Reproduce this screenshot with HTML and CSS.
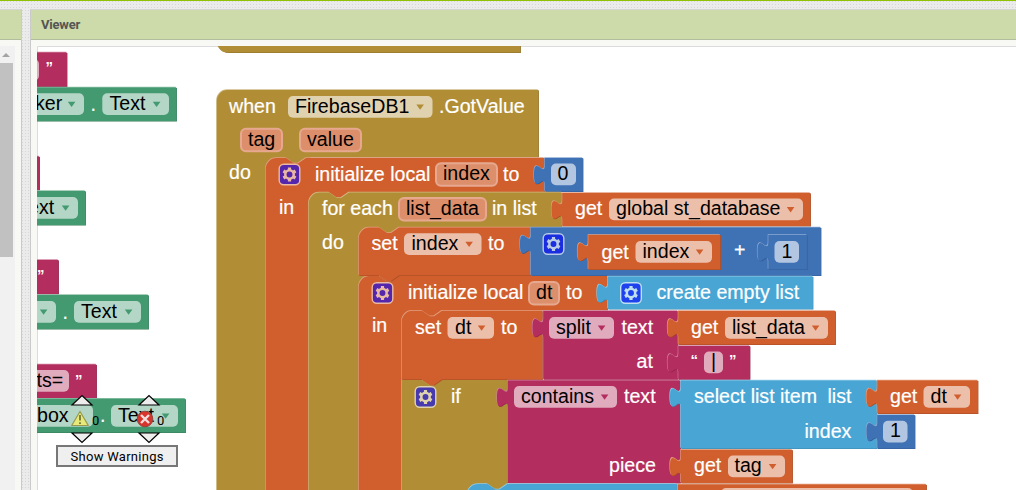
FILE: index.html
```html
<!DOCTYPE html>
<html lang="en">
<head>
<meta charset="utf-8">
<title>Viewer</title>
<link rel="stylesheet" href="styles.css">
</head>
<body>
<div class="topline"></div>
<main class="workbench">
  <aside class="palette">
    <div class="panel-head"></div>
    <div class="palette-body">
      <div class="scrollbar"><div class="scroll-up"></div><div class="scroll-thumb"></div></div>
    </div>
  </aside>
  <section class="viewer">
    <div class="panel-head">Viewer</div>
    <div class="viewer-body"><svg id="canvas" class="canvas" viewBox="37 46 979 444" width="979" height="444"></svg></div>
  </section>
</main>
<script src="blocks.js"></script>
</body>
</html>
```
FILE: styles.css
```css
* { box-sizing: border-box; }
body {
  margin: 0;
  width: 1016px;
  height: 490px;
  overflow: hidden;
  display: flex;
  flex-direction: column;
  font-family: Roboto, "Liberation Sans", sans-serif;
  background-color: #ebebeb;
  background-image: radial-gradient(#d7d7d7 0.8px, transparent 1px);
  background-size: 3px 3px;
}
.topline { flex: none; height: 1px; background: #8fc202; }
.workbench { flex: 1; display: flex; gap: 8px; padding-top: 8px; min-height: 0; }
.palette { width: 22px; flex: none; display: flex; flex-direction: column; background: #f8f9f4; border-right: 1px solid #cacaca; border-top: 1px solid #d4d4d4; }
.viewer { flex: 1; display: flex; flex-direction: column; background: #f8f9f4; border-left: 1px solid #cacaca; border-top: 1px solid #d4d4d4; }
.panel-head { flex: none; height: 30px; padding-left: 10px; line-height: 29px; font-size: 13px; font-weight: 700; letter-spacing: -0.2px; color: #555; background: #ccdba9; border-bottom: 1px solid #b3bd9d; }
.palette-body { flex: 1; padding-top: 6px; display: flex; }
.scrollbar { width: 15px; padding-right: 2px; background: #f1f1f1; }
.scroll-up { height: 4px; width: 8px; margin: 7px 0 6px 2px; background: #a3a3a3; clip-path: polygon(50% 0, 100% 100%, 0 100%); }
.scroll-thumb { height: 194px; background: #c1c1c1; }
.viewer-body { flex: 1; padding: 6px 0 0 6px; }
.canvas { display: block; background: #fff; }
.frame { fill: none; stroke: #dcdcdc; stroke-width: 1; }
.label, .value { font-family: "Liberation Sans", Arial, sans-serif; font-size: 19.6px; white-space: pre; }
.label { fill: #fff; stroke: #fff; stroke-width: 0.2px; }
.value { fill: #000; }
.quote { font-family: "Liberation Sans", Arial, sans-serif; font-size: 15px; font-weight: 700; fill: #fff; }
.field { fill: #fff; fill-opacity: 0.6; }
.param { fill: #dd8f6c; stroke: #e6a990; stroke-width: 2; }
.gear-box { fill: #00f; fill-opacity: 0.6; stroke-width: 1.4; }
.gear-ring { fill: none; stroke-width: 2.5; }
.gear-teeth { fill: none; stroke-width: 3.2; }
.tri { fill: #ededed; stroke: #000; stroke-width: 1.2; }
.button { fill: #efefef; stroke: #777; stroke-width: 2; }
.ui-text { font-family: Roboto, sans-serif; font-size: 13px; fill: #000; }
```
FILE: blocks.js
```js
const svg = document.getElementById('canvas');
const C = {
  gold: ['#b18e35', '#d0bb85', '#8b702b'],
  orange: ['#d05f2d', '#e49e80', '#a54b24'],
  blue: ['#3f71b5', '#8caad3', '#325a90'],
  cyan: ['#49a6d4', '#92cae5', '#3a84a9'],
  pink: ['#b32d5e', '#d1819e', '#8e244b'],
  green: ['#439970', '#8ec2a9', '#357a59']
};
const NOTCH = 'l8,5.4 h4 l8,-5.4';
const parts = [];
const add = s => parts.push(s);

function shape(c, d) {
  const [main, light, dark] = C[c];
  add(`<path d="${d}" fill="${dark}" transform="translate(.4 .5)"/>`);
  add(`<path d="${d}" fill="${light}" transform="translate(-.8 -.7)"/>`);
  add(`<path d="${d}" fill="${main}" transform="translate(-.2 .1)"/>`);
}
// Output block with a puzzle tab on its left edge.
function output(c, x, y, r, b) {
  shape(c, `M${x},${y} H${r} V${b} H${x} V${y + 27} c0,-13.5 -10.8,10.8 -10.8,-10.1 s10.8,3.4 10.8,-10.1 Z`);
}
function notchedTop(x, y, r) {
  return `M${x},${y + 10.8} a10.8,10.8 0 0 1 10.8,-10.8 H${x + 20.2} ${NOTCH} H${r}`;
}
// Container whose first row ends at b and whose arm runs down the left.
function wrap(c, x, y, r, b, inner, notch = true) {
  const head = notch ? notchedTop(x, y, r) : `M${x},${y + 10.8} a10.8,10.8 0 0 1 10.8,-10.8 H${r}`;
  shape(c, `${head} V${b} H${inner + 44} V500 H${x} Z`);
}
function stack(c, x, y, r, b, rounded) {
  const start = rounded ? notchedTop(x, y, r) : `M${x},${y} H${x + 20.2} ${NOTCH} H${r}`;
  shape(c, `${start} V${b} H${x + 40.2} l-8,5.4 h-4 l-8,-5.4 H${x} Z`);
}
function text(cls, x, y, s, w) {
  add(`<text class="${cls}" x="${x}" y="${y}"${w ? ` textLength="${w}"` : ''}>${s}</text>`);
}
const label = (x, y, s) => text('label', x, y, s);
function field(x, y, r, s, tx, c) {
  add(`<rect class="field" x="${x}" y="${y}" width="${r - x}" height="21.7" rx="5"/>`);
  text('value', tx, y + 16.7, s);
  if (c) add(`<path fill="${C[c][0]}" d="M${r - 16.2},${y + 8.5} h7.6 l-3.8,5.3 Z"/>`);
}
function param(x, y, r, s, tx) {
  add(`<rect class="param" x="${x + 1}" y="${y + 1}" width="${r - x - 2}" height="22.4" rx="5"/>`);
  text('value', tx, y + 17.8, s);
}
function gear(x, y, tint) {
  let teeth = '';
  for (let i = 0; i < 6; i++) {
    const a = (i * 60 + 30) * Math.PI / 180;
    teeth += `M${Math.cos(a) * 4.5},${Math.sin(a) * 4.5} L${Math.cos(a) * 7},${Math.sin(a) * 7} `;
  }
  add(`<g transform="translate(${x + 11} ${y + 11})" stroke="${tint}"><rect class="gear-box" x="-10.3" y="-10.3" width="20.6" height="20.6" rx="4.5"/><circle class="gear-ring" r="4.2"/><path class="gear-teeth" d="${teeth}"/></g>`);
}

add('<path class="frame" d="M37.5,490 V46.5 H1016"/>');

// Blocks at the left edge
output('pink', 10, 52.5, 67, 86.5);
field(10, 59, 39, '', 0);
text('quote', 45.5, 72, '”');
output('green', 10, 87.5, 176.5, 121);
field(10, 93.3, 84, 'ker', 35, 'green');
label(90.5, 110.5, '.');
field(102.3, 93.3, 169, 'Text', 109.5, 'green');
output('pink', 10, 156.5, 39.5, 190);
output('green', 10, 191, 85.5, 225);
field(10, 197, 78, 'ext', 28, 'green');
output('pink', 10, 260, 58.5, 294);
text('quote', 37, 280, '”');
output('green', 10, 295, 148.5, 329);
field(10, 301, 56, '', 0, 'green');
label(62.5, 318.5, '.');
field(74, 301, 141, 'Text', 81, 'green');
output('pink', 10, 364.5, 96.5, 398);
field(10, 370, 69, 'ts=', 36.5);
text('quote', 75, 385, '”');
output('green', 10, 398.7, 185.5, 432.5);
field(10, 405, 93, 'box', 37, '');
label(100, 422, '.');
field(111, 405, 178, 'Text', 118, 'green');

// Event handler
shape('gold', 'M217,40 H520.5 V52.5 H228 a10.8,10.8 0 0 1 -10.8,-10.8 Z');
wrap('gold', 217, 90, 538.5, 157, 266, false);
label(229, 112.5, 'when');
field(288, 96, 432.5, 'FirebaseDB1', 295, 'gold');
label(439, 112.5, '.GotValue');
param(240, 127.8, 283, 'tag', 248);
param(299, 127.8, 362, 'value', 307);
label(229, 179, 'do');

wrap('orange', 266, 158, 544.5, 192, 309);
gear(278.5, 163.5, '#eab9a3');
label(315, 180.5, 'initialize local');
param(435, 162.3, 498, 'index', 443);
label(503, 180.5, 'to');
label(279, 214, 'in');
output('blue', 545, 158, 583, 191.5);
field(551, 163.6, 576, '0', 557.5);

wrap('gold', 309, 192.5, 562, 227, 359);
label(322, 215, 'for each');
param(398, 197, 487, 'list_data', 406);
label(492, 215, 'in list');
label(322, 249, 'do');
output('orange', 562.5, 193, 810.5, 226);
label(575, 215, 'get');
field(609, 198.6, 803, 'global st_database', 616, 'orange');

wrap('orange', 359, 276, 607.5, 310, 402);
stack('orange', 359, 227.5, 530.5, 275.5, true);
label(371.5, 250, 'set');
field(404, 233.3, 481.5, 'index', 411.5, 'orange');
label(488, 250, 'to');
output('blue', 531, 227.5, 821, 275.5);
gear(542.5, 233, '#b8cae4');
output('orange', 588.5, 235, 720.5, 269.5);
label(601.5, 258.5, 'get');
field(635.5, 241, 712, 'index', 642.5, 'orange');
label(734, 257, '+');
output('blue', 768.5, 235, 807, 269.5);
field(774.5, 241, 799, '1', 781.5);

gear(371.5, 282, '#eab9a3');
label(408, 299, 'initialize local');
param(528, 281, 560, 'dt', 536);
label(566, 299, 'to');
label(372, 332, 'in');
output('cyan', 608, 276.5, 813, 309);
gear(620, 282, '#c0e0f0');
label(656.5, 299, 'create empty list');

stack('gold', 402, 380, 507.5, 500, false);
stack('orange', 402, 310.7, 542.5, 379.5, true);
label(415, 334, 'set');
field(447.5, 317, 494, 'dt', 455, 'orange');
label(501, 334, 'to');
output('pink', 543.5, 311, 678, 379.3);
field(549, 317, 614, 'split', 556, 'pink');
label(621.5, 334, 'text');
label(636.5, 367.5, 'at');
output('orange', 678.5, 311, 835.5, 344.5);
label(691, 334, 'get');
field(725, 317, 828, 'list_data', 732, 'orange');
output('pink', 678.5, 346, 750, 379.3);
text('quote', 690.5, 365, '“');
field(704, 351.5, 723, '|', 711);
text('quote', 729, 365, '”');

gear(414.5, 386, '#dfd2ae');
label(451, 403, 'if');
output('pink', 508, 380.5, 680.5, 483);
field(514, 386, 617, 'contains', 521, 'pink');
label(624, 403, 'text');
label(609, 471.5, 'piece');
output('cyan', 681, 380.5, 877, 448.5);
label(694, 403, 'select list item');
label(827.5, 403, 'list');
label(804.5, 437.5, 'index');
output('orange', 877.5, 380.5, 978, 413.5);
label(890, 403, 'get');
field(923.5, 386, 970, 'dt', 930.5, 'orange');
output('blue', 877.5, 415, 915, 448.5);
field(883, 420.7, 907.5, '1', 890);
output('orange', 681, 449.8, 792.5, 483);
label(694, 471.5, 'get');
field(728, 455.5, 785, 'tag', 734.5, 'orange');
shape('cyan', notchedTop(467.5, 484, 677) + ' V500 H467.5 Z');
shape('orange', 'M678,484.5 H926.5 V500 H678 Z');
add('<rect class="field" x="721" y="488" width="192" height="21" rx="5"/>');

// Warning and error counters
for (const cx of [82, 149]) {
  add(`<path class="tri" d="M${cx - 10},405 H${cx + 10} L${cx},395.5 Z M${cx - 10},433 H${cx + 10} L${cx},442.5 Z"/>`);
}
add('<path d="M80,411.5 L88.3,425.5 H71.7 Z" fill="#e7e978" stroke="#98994f" stroke-width="1.2" stroke-linejoin="round"/><path d="M80,415 V420.5 M80,422.2 V424" stroke="#66682f" stroke-width="1.6"/>');
text('ui-text', 92, 424.5, '0');
add('<circle cx="145" cy="419" r="7.8" fill="#d8342c" stroke="#8d4740" stroke-width="1"/><path d="M141,415 l8,8 m0,-8 l-8,8" stroke="#f2dedc" stroke-width="2.4"/>');
text('ui-text', 157, 424.5, '0');
add('<rect class="button" x="57" y="446" width="120" height="20"/>');
text('ui-text', 70.5, 461, 'Show Warnings', 93);

svg.innerHTML = parts.join('');
```
